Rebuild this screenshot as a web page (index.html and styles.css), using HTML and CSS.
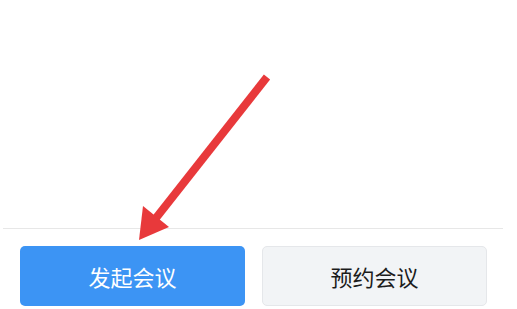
FILE: index.html
```html
<!DOCTYPE html>
<html lang="zh">
<head>
<meta charset="utf-8">
<link rel="stylesheet" href="styles.css">
</head>
<body>
<div class="page">
  <div class="content"></div>
  <div class="divider"></div>
  <div class="actions">
    <button class="btn btn-primary">发起会议</button>
    <button class="btn btn-secondary">预约会议</button>
  </div>
  <svg class="arrow" width="517" height="309" viewBox="0 0 517 309" xmlns="http://www.w3.org/2000/svg">
    <line x1="267" y1="77" x2="156" y2="218" stroke="#e8393b" stroke-width="8"/>
    <polygon points="139,240 143,206 169,227" fill="#e8393b"/>
  </svg>
</div>
</body>
</html>
```
FILE: styles.css
```css
html, body {
  margin: 0;
  padding: 0;
  background: #ffffff;
}
.page {
  position: relative;
  width: 517px;
  height: 309px;
  overflow: hidden;
  font-family: "Noto Sans CJK SC", "Noto Sans", sans-serif;
}
.content {
  height: 228px;
}
.divider {
  margin-left: 3px;
  width: 500px;
  height: 1px;
  background: #e7e7e7;
}
.actions {
  display: flex;
  gap: 17px;
  padding: 17px 0 0 20px;
}
.btn {
  width: 225px;
  height: 60px;
  border-radius: 5px;
  font-family: inherit;
  font-size: 22px;
  line-height: 1;
  display: flex;
  align-items: center;
  justify-content: center;
  padding: 0;
  box-sizing: border-box;
}
.btn-primary {
  background: #3c94f4;
  color: #ffffff;
  border: none;
}
.btn-secondary {
  background: #f2f4f6;
  color: #1c1c1c;
  border: 1px solid #e5e7ea;
}
.arrow {
  position: absolute;
  left: 0;
  top: 0;
}
```
